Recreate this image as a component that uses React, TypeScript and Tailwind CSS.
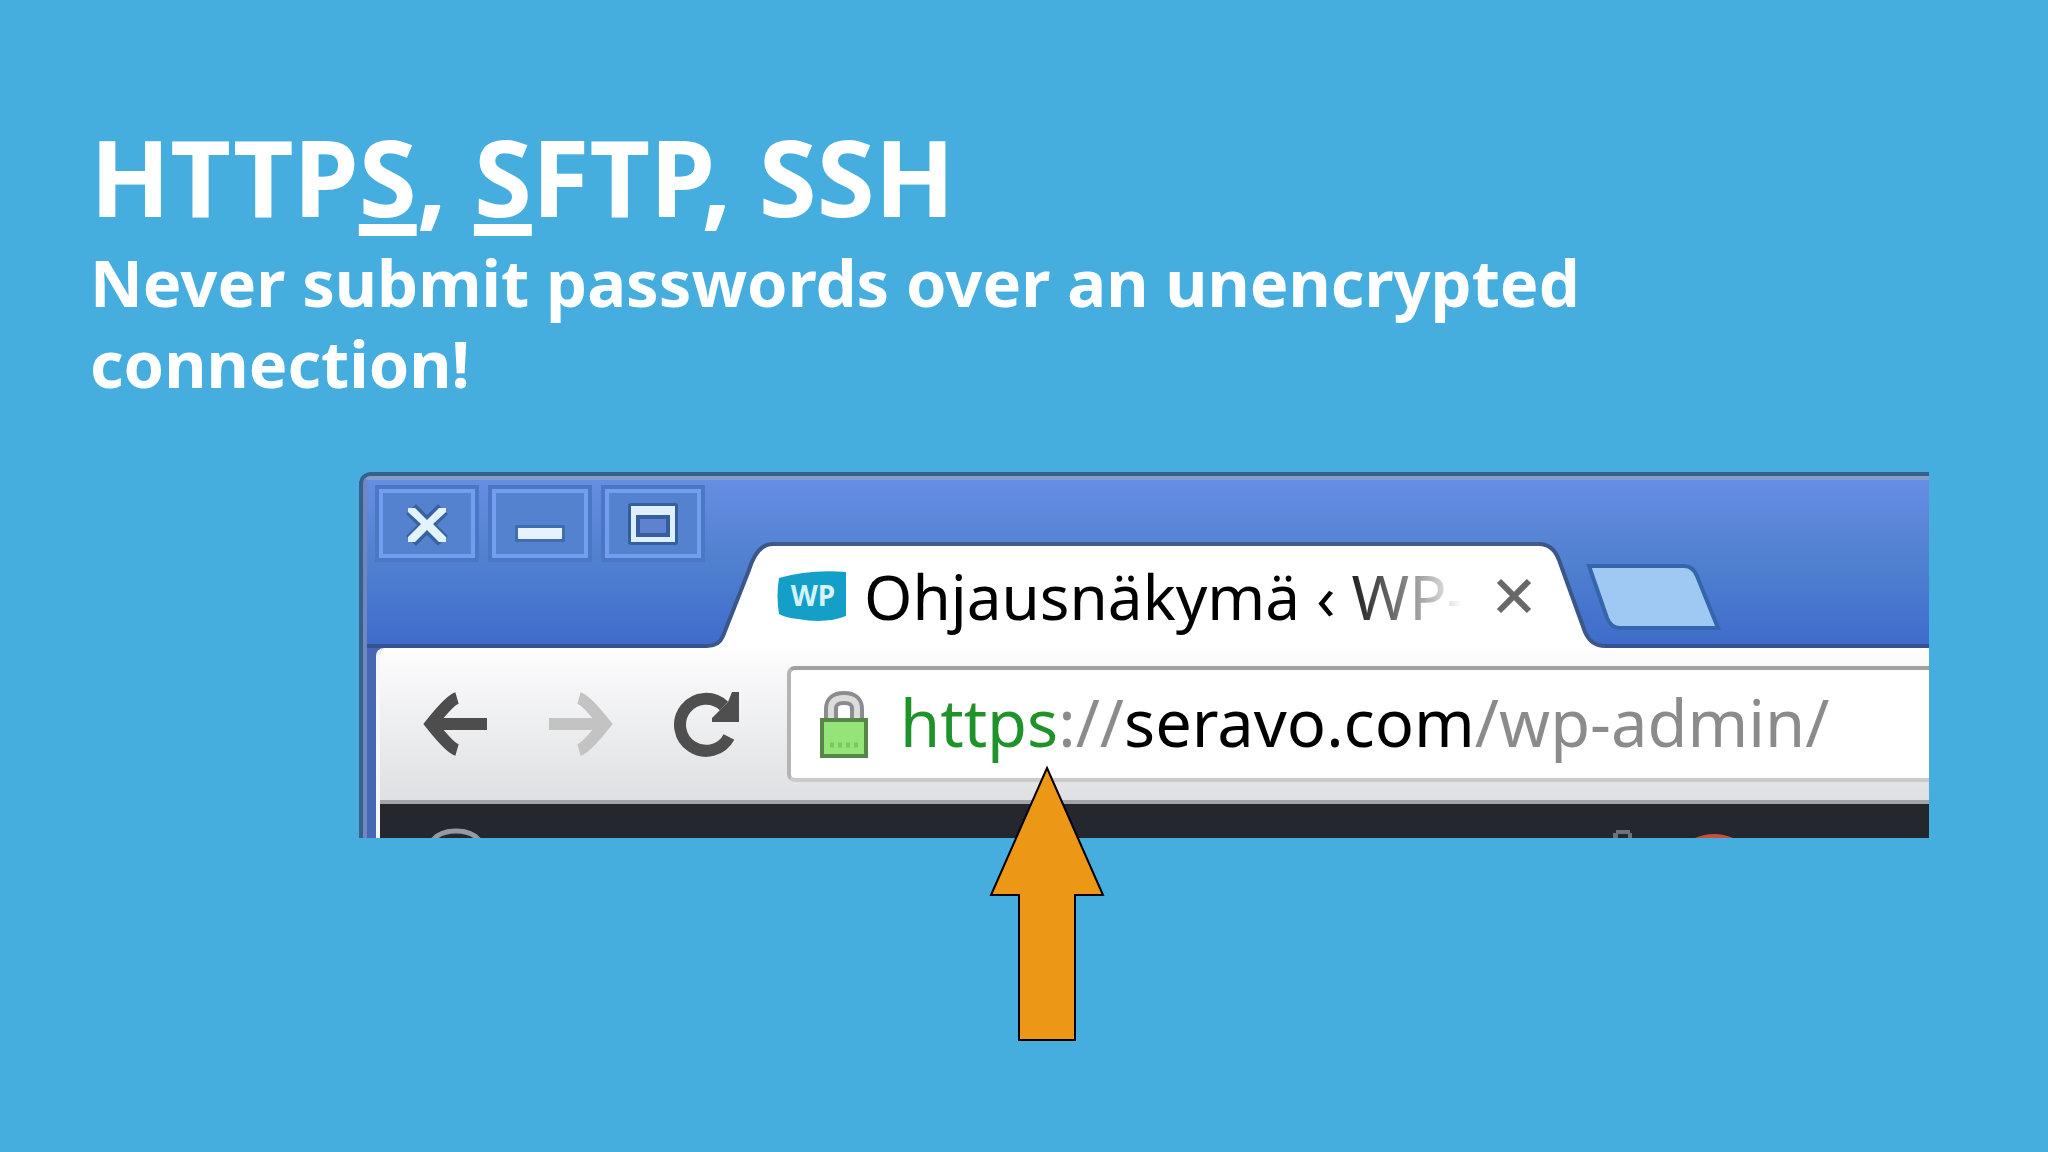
import React from 'react';

interface WindowButtonProps {
  label: string;
  children: React.ReactNode;
}

const WindowButton: React.FC<WindowButtonProps> = ({ label, children }) => {
  return (
    <button
      type="button"
      aria-label={label}
      className="w-[104px] h-[77px] border-4 border-[#4b77c5] bg-[#5482cf] shrink-0"
    >
      <span className="flex h-full w-full items-center justify-center border-4 border-[#709ef0]">
        {children}
      </span>
    </button>
  );
};

const TitleBar = () => {
  return (
    <div className="flex h-[168px] items-end bg-linear-to-b from-[#668ee2] via-[#5080d0] to-[#3e6bcb]">
      {/* Window controls */}
      <div className="flex h-full items-start gap-[9px] border-b-4 border-[#33528f] pt-[5px] pr-[2px] pl-[8px]">
        <WindowButton label="Close window">
          <svg width="48" height="44" viewBox="0 0 48 44" fill="none">
            <path d="M8 7L40 39M40 7L8 39" stroke="#39639f" strokeWidth="14" />
            <path d="M5 6h7l12 12 12-12h7v4L30 22l13 13v5h-7L24 28 12 40H5v-5l13-13L5 10z" fill="#e2f2ff" />
          </svg>
        </WindowButton>
        <WindowButton label="Minimize">
          <svg width="52" height="44" viewBox="0 0 52 44">
            <rect x="1" y="23" width="50" height="17" fill="#406db2" />
            <rect x="4" y="26" width="44" height="11" fill="#e6f3ff" />
          </svg>
        </WindowButton>
        <WindowButton label="Maximize">
          <svg width="52" height="44" viewBox="0 0 52 44">
            <rect x="1" y="1" width="50" height="42" rx="3" fill="#355f9c" />
            <rect x="4" y="4" width="44" height="36" fill="#def0ff" />
            <rect x="9" y="13" width="34" height="22" fill="#365da0" />
            <rect x="13" y="17" width="26" height="14" fill="#5f82d0" />
          </svg>
        </WindowButton>
      </div>

      {/* Active tab */}
      <div className="flex">
        <svg width="66" height="106" viewBox="0 0 66 106" className="shrink-0" fill="none">
          <path d="M0 106V104Q12 104 16 94L42 28Q50 2 66 2V106z" fill="#fff" />
          <path d="M0 104Q12 104 16 94L42 28Q50 2 66 2" stroke="#3b5789" strokeWidth="4" />
        </svg>
        <div className="flex h-[106px] w-[766px] items-start border-t-4 border-[#435b8b] bg-white pt-[10px] pl-[3px]">
          <svg width="72" height="56" viewBox="0 0 72 56" className="mt-[12px] shrink-0">
            <path d="M3 10Q34 1 70 4V48Q50 56 22 51Q10 50 3 46Q0 28 3 10z" fill="#149fc8" />
            <text
              x="37"
              y="38"
              textAnchor="middle"
              fill="#d5f3fc"
              fontSize="28"
              fontWeight="700"
              fontFamily="Noto Sans, sans-serif"
            >
              WP
            </text>
          </svg>
          <span className="ml-[16px] w-[610px] bg-linear-to-r from-black from-74% to-white to-98% bg-clip-text text-[62px] leading-[80px] whitespace-nowrap text-transparent">
            Ohjausnäkymä ‹ WP-
          </span>
          <button type="button" aria-label="Close tab" className="mt-[22px] mr-[7px] ml-auto">
            <svg width="36" height="36" viewBox="0 0 36 36" stroke="#686868" strokeWidth="6">
              <path d="M3 3L33 33M33 3L3 33" />
            </svg>
          </button>
        </div>
        <svg width="66" height="106" viewBox="0 0 66 106" className="shrink-0" fill="none">
          <path d="M0 2Q14 2 20 18L46 90Q52 104 66 104V106H0z" fill="#fff" />
          <path d="M0 2Q14 2 20 18L46 90Q52 104 66 104" stroke="#3b5789" strokeWidth="4" />
        </svg>
      </div>

      <div className="flex h-full flex-1 items-start border-b-4 border-[#33528f]">
        <button type="button" aria-label="New tab" className="mt-[84px] -ml-[19px] shrink-0">
          <svg width="136" height="66" viewBox="0 0 136 66">
            <path
              d="M3 2H98Q107 2 111 12L132 64H34Q25 64 21 54z"
              fill="#9fc9f3"
              stroke="#3566ad"
              strokeWidth="4"
            />
          </svg>
        </button>
      </div>
    </div>
  );
};

const Toolbar = () => {
  return (
    <div className="flex h-[156px] items-start border-b-4 border-[#a3a5a8] bg-linear-to-b from-[#fdfdfe] to-[#dfe0e3] pt-[18px]">
      <div className="flex w-[407px] shrink-0 gap-[60px] pt-[24px] pl-[42px]">
        <button type="button" aria-label="Back">
          <svg width="66" height="68" viewBox="0 0 66 68" fill="none" stroke="#4d4d4d" strokeWidth="12">
            <path d="M65 34H12" />
            <path d="M35 8Q28 10 9 34Q28 58 35 60" />
          </svg>
        </button>
        <button type="button" aria-label="Forward">
          <svg width="66" height="68" viewBox="0 0 66 68" fill="none" stroke="#c3c3c3" strokeWidth="12">
            <path d="M1 34H54" />
            <path d="M31 8Q38 10 57 34Q38 58 31 60" />
          </svg>
        </button>
        <button type="button" aria-label="Reload">
          <svg width="66" height="68" viewBox="0 0 66 68" fill="none">
            <path d="M55 47A26 26 0 1 1 50 16" stroke="#4f4f4f" strokeWidth="12" />
            <path d="M65 2V32H38V28L54 12L58 2z" fill="#4f4f4f" />
          </svg>
        </button>
      </div>

      {/* Address bar */}
      <label className="flex h-[116px] min-w-0 flex-1 items-start rounded-l-[8px] border-4 border-r-0 border-t-[#a0a0a0] border-b-[#cacaca] border-l-[#b4b4b4] bg-white pl-[29px]">
        <svg width="48" height="68" viewBox="0 0 48 68" className="mt-[21px] shrink-0" fill="none">
          <path d="M11 30V18Q11 7 24 7Q37 7 37 18V30" stroke="#8b8b92" strokeWidth="14" />
          <path d="M11 30V18Q11 7 24 7Q37 7 37 18V30" stroke="#dcdcd8" strokeWidth="6" />
          <rect x="2" y="29" width="44" height="36" fill="#94e47a" stroke="#588549" strokeWidth="4" />
          <path d="M10 54h28" stroke="#76c95f" strokeWidth="5" strokeDasharray="4 4" />
        </svg>
        <input
          type="text"
          aria-label="Address"
          defaultValue="https://seravo.com/wp-admin/"
          className="ml-[32px] h-[104px] min-w-0 flex-1 bg-[linear-gradient(90deg,#20922a_158px,#8b8b8b_158px,#8b8b8b_225px,#000_225px,#000_571px,#8b8b8b_571px)] bg-clip-text text-[65px] text-transparent outline-none"
        />
      </label>
    </div>
  );
};

const AdminBar = () => {
  return (
    <div className="flex h-[34px] items-end bg-[#24272d] px-[48px]">
      <svg width="56" height="10" viewBox="0 0 56 10" fill="none" className="shrink-0">
        <path d="M5 12Q12 3 28 3T51 12" stroke="#96999d" strokeWidth="5" />
      </svg>
      <svg width="130" height="12" viewBox="0 0 130 12" className="mr-[142px] ml-auto shrink-0">
        <path d="M4 12V7H7V4H21V7H23V12H19V8H9V12z" fill="#6f7276" />
        <path d="M86 12Q105 4 124 12z" fill="#c9503b" />
      </svg>
    </div>
  );
};

export default function App() {
  return (
    <main className="min-h-screen overflow-hidden bg-[#46aedf] pt-[112px] font-['Noto_Sans',sans-serif]">
      <header className="mr-[340px] ml-[90px] font-bold text-white">
        <h1 className="text-[105px] leading-[130px]">
          HTTP
          <span className="underline decoration-[12px] underline-offset-[7px] [text-decoration-skip-ink:none]">S</span>,{' '}
          <span className="underline decoration-[12px] underline-offset-[7px] [text-decoration-skip-ink:none]">S</span>
          FTP, SSH
        </h1>
        <p className="text-[65px] leading-[81px]">Never submit passwords over an unencrypted connection!</p>
      </header>

      <div className="relative mt-[68px] mr-[119px] ml-[359px]">
        <section className="overflow-hidden rounded-tl-[12px] border-t-4 border-l-4 border-[#37608a]">
          <div className="border-t-4 border-l-4 border-t-[#839fc9] border-l-[#7187c2] bg-[#4567b4]">
            <TitleBar />
            <div className="ml-[9px] overflow-hidden rounded-tl-[8px] border-l-4 border-[#f5f7fb]">
              <Toolbar />
              <AdminBar />
            </div>
          </div>
        </section>

        {/* Arrow pointing at the protocol */}
        <svg
          width="118"
          height="278"
          viewBox="0 0 118 278"
          className="absolute top-[293px] left-[629px]"
          aria-hidden="true"
        >
          <path d="M59 3L115 130H87V275H31V130H3z" fill="#ed9716" stroke="#000" strokeWidth="2" />
        </svg>
      </div>
    </main>
  );
}
